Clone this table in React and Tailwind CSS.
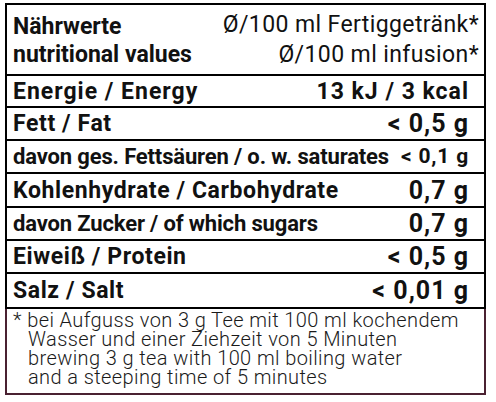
import React from "react";

const rows = [
  { label: "Energie / Energy", value: "13 kJ / 3 kcal", h: "h-[32px]", size: "text-[23px] tracking-[1px]", vsize: "text-[23px] tracking-[1px]" },
  { label: "Fett / Fat", value: "< 0,5 g", h: "h-[33px]", size: "text-[23px] tracking-[0.6px]", vsize: "text-[25px] tracking-[1px]" },
  { label: "davon ges. Fettsäuren / o. w. saturates", value: "< 0,1 g", h: "h-[33px]", size: "text-[22px] tracking-[-0.15px]", vsize: "text-[21px] tracking-[0.8px]" },
  { label: "Kohlenhydrate / Carbohydrate", value: "0,7 g", h: "h-[34px]", size: "text-[23px] tracking-[0.6px]", vsize: "text-[25px] tracking-[1px]" },
  { label: "davon Zucker / of which sugars", value: "0,7 g", h: "h-[33px]", size: "text-[22px] tracking-[-0.15px]", vsize: "text-[25px] tracking-[1px]" },
  { label: "Eiweiß / Protein", value: "< 0,5 g", h: "h-[33px]", size: "text-[23px] tracking-[0.6px]", vsize: "text-[25px] tracking-[1px]" },
  { label: "Salz / Salt", value: "< 0,01 g", h: "h-[33px]", size: "text-[23px] tracking-[0.6px]", vsize: "text-[25px] tracking-[1px]" },
];

export default function App() {
  return (
    <div className="w-[496px] h-[402px] bg-white pl-[5px] pt-[3px] font-['Roboto',sans-serif] text-[#111]">
      <div className="w-[481px]">
        <div className="border-2 border-black">
          {/* header */}
          <div className="flex justify-between h-[71px] border-b-2 border-black pl-[6px] pr-[5px] pt-[7px]">
            <div className="font-bold text-[23px] leading-[28px] pt-[1px]">
              <div>Nährwerte</div>
              <div>nutritional values</div>
            </div>
            <div className="text-right text-[23px] tracking-[0.4px] leading-[30px] -mt-[2px]">
              <div>Ø/100 ml Fertiggetränk*</div>
              <div>Ø/100 ml infusion*</div>
            </div>
          </div>
          {rows.map((r, i) => (
            <div
              key={r.label}
              className={`flex items-center justify-between ${r.h} pl-[6px] pr-[15px] font-bold ${
                i < rows.length - 1 ? "border-b-2 border-black" : ""
              }`}
            >
              <span className={`${r.size} leading-none whitespace-nowrap`}>{r.label}</span>
              <span className={`${r.vsize} leading-none whitespace-nowrap`}>{r.value}</span>
            </div>
          ))}
        </div>
        {/* footnote */}
        <div className="border-2 border-t-0 border-[#4a2131] h-[86px] pl-[6px] pt-[2px] text-[20px] tracking-[0.4px] leading-[19px] font-light text-[#1a1a1a] whitespace-nowrap">
          <div>* bei Aufguss von 3 g Tee mit 100 ml kochendem</div>
          <div className="pl-[15px]">Wasser und einer Ziehzeit von 5 Minuten</div>
          <div className="pl-[15px]">brewing 3 g tea with 100 ml boiling water</div>
          <div className="pl-[15px]">and a steeping time of 5 minutes</div>
        </div>
      </div>
    </div>
  );
}
